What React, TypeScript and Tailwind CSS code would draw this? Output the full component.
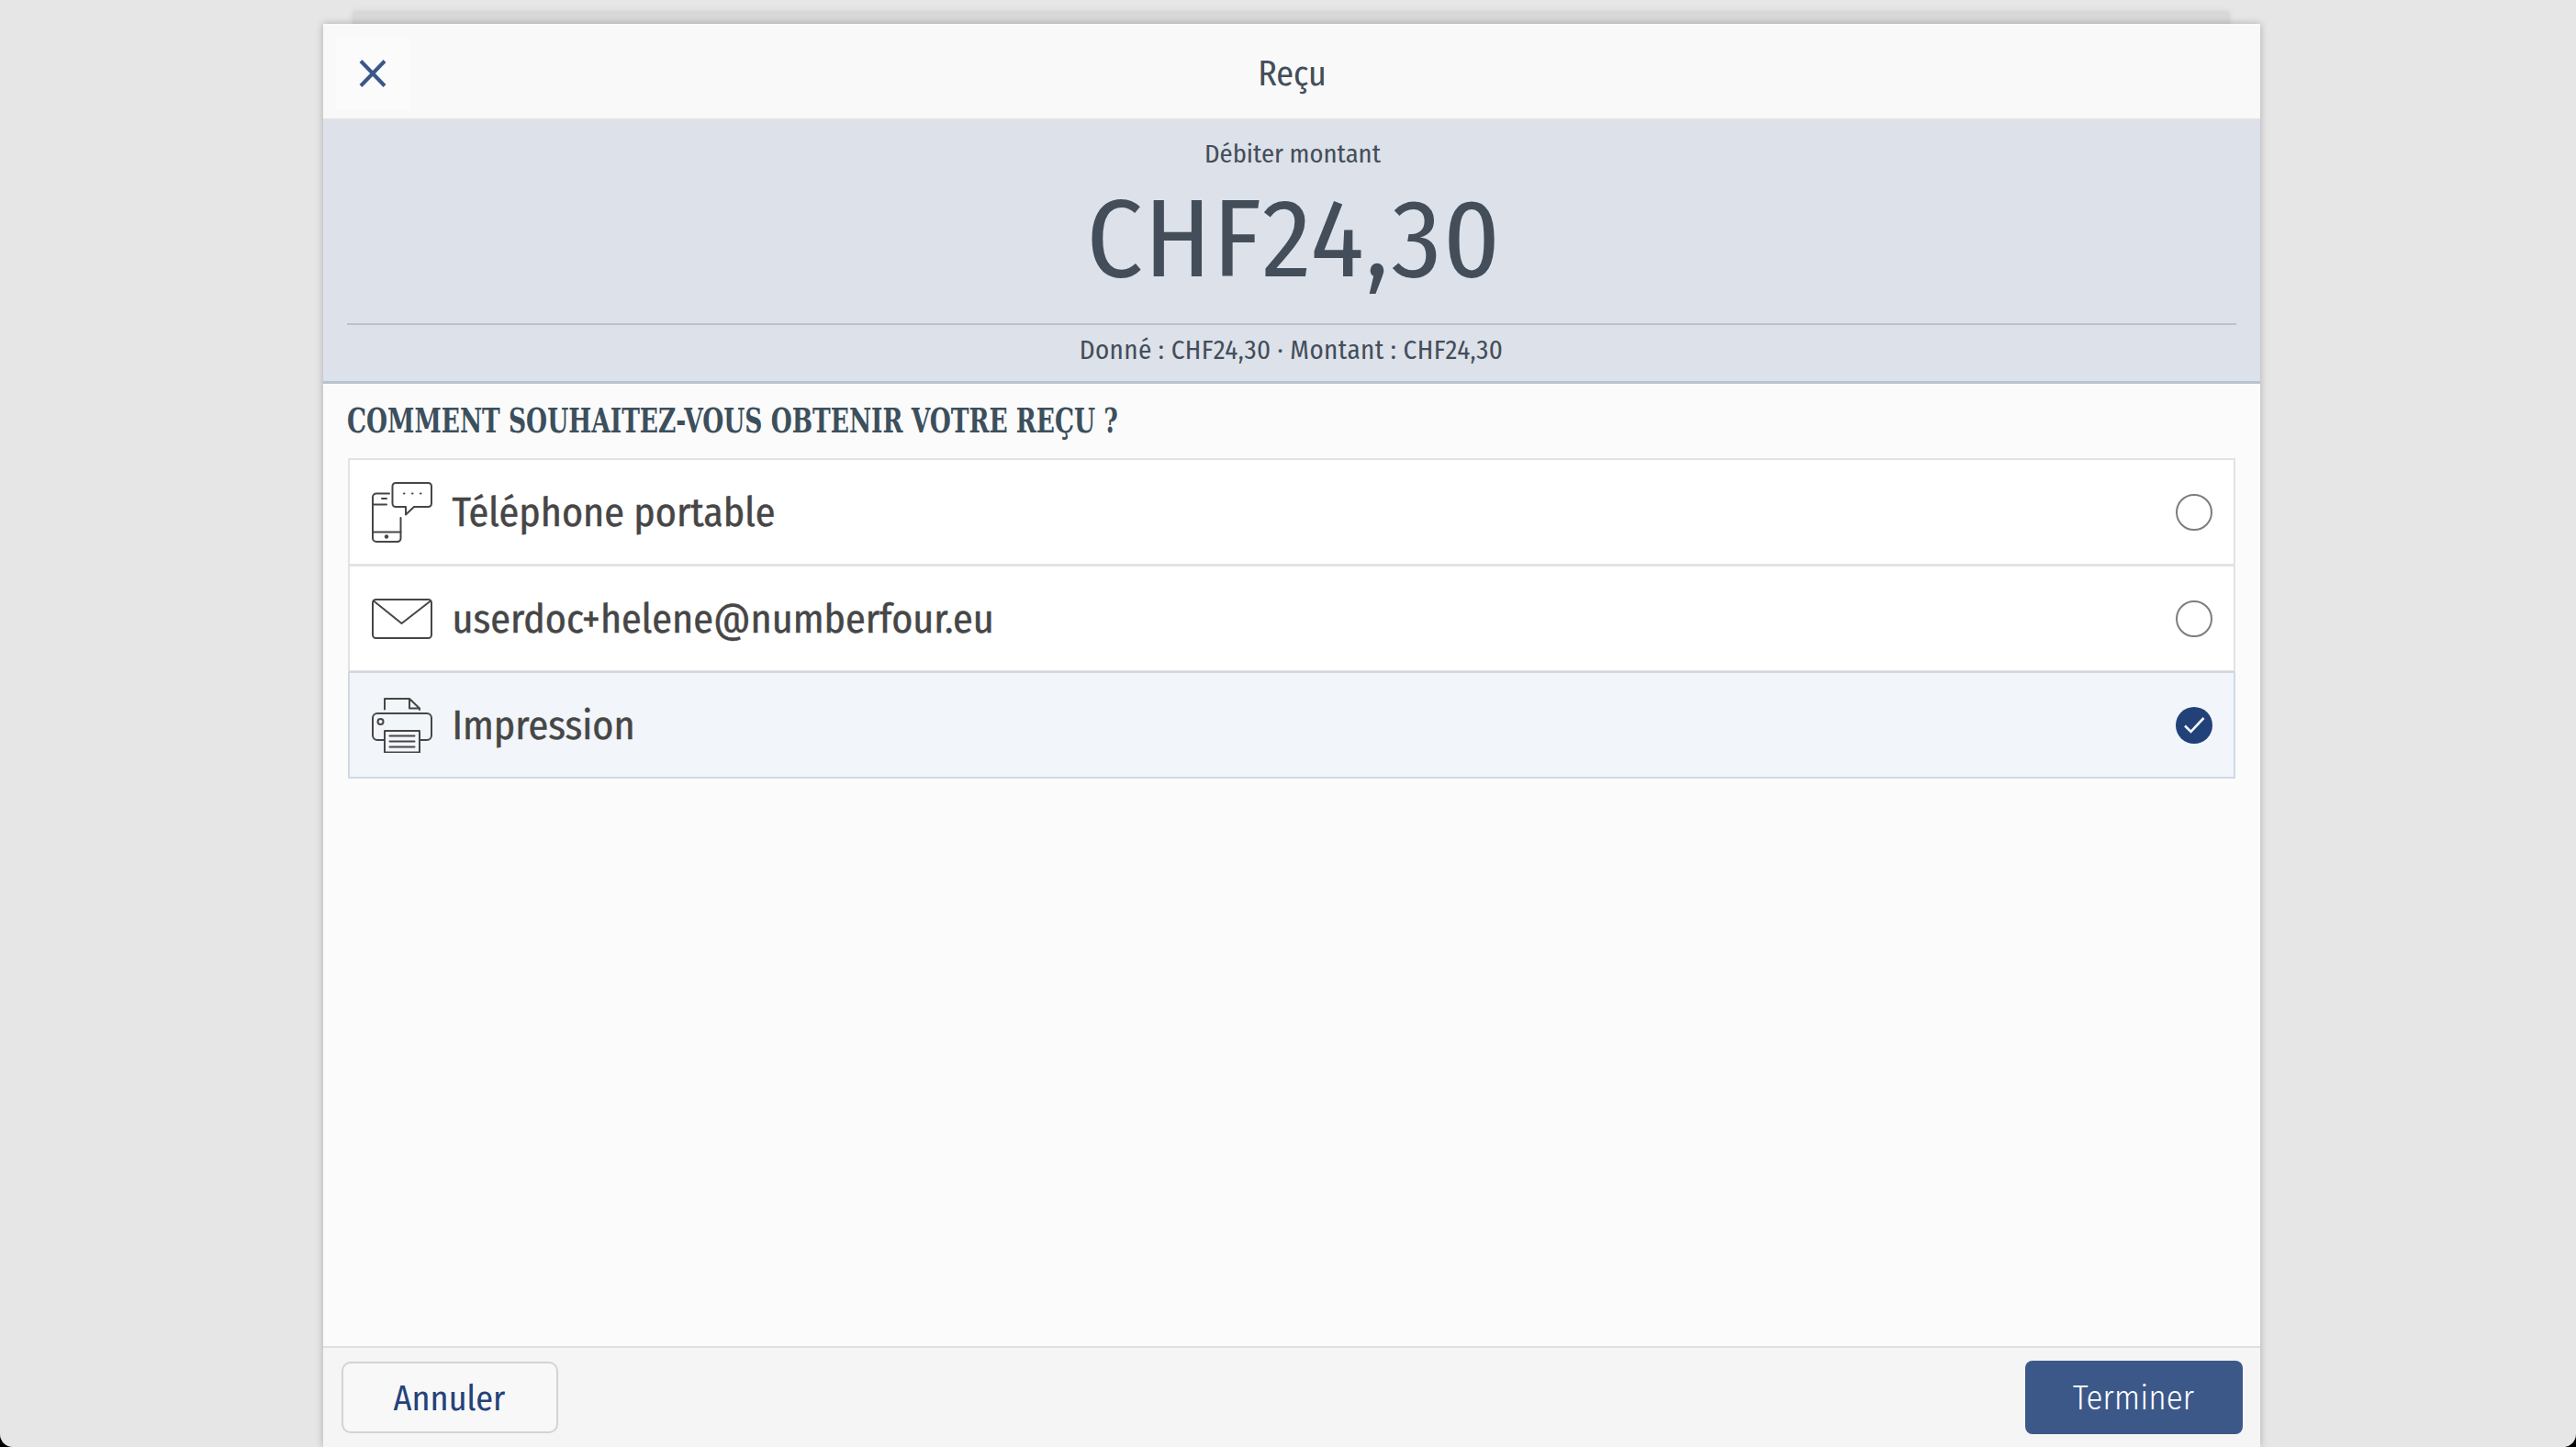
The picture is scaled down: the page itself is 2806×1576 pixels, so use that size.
import React from "react";

const sans = "font-['Fira_Sans_Condensed','Lato','Noto_Sans',sans-serif]";

const PhoneIcon = () => (
    <svg width="66" height="66" viewBox="0 0 66 66" fill="none" stroke="#464646" strokeWidth="2" strokeLinecap="round" strokeLinejoin="round">
        <path d="M37 27H26a3.500 3.500 0 0 1-3.500-3.500V4.500A3.500 3.500 0 0 1 26 1h35.500A3.500 3.500 0 0 1 65 4.500v19a3.500 3.500 0 0 1-3.500 3.500H46l-9 8.500z" />
        <path d="M19 12.500H5A4 4 0 0 0 1 16.500V61a4 4 0 0 0 4 4H28a3.500 3.500 0 0 0 3.500-3.500V39" />
        <path d="M1 24.500H16M11 18H16M1 54.500H31.500M35 12.500h.5M44 12.500h.5M53 12.500h.5" />
        <circle cx="16" cy="59.500" r="2.200" fill="#464646" stroke="none" />
    </svg>
);

const MailIcon = () => (
    <svg width="66" height="44" viewBox="0 0 66 44" fill="none" stroke="#464646" strokeWidth="2" strokeLinecap="round" strokeLinejoin="round">
        <rect x="1" y="1" width="64" height="42" rx="3.500" />
        <path d="M2 2.500L32.500 27L64 2.500" />
    </svg>
);

const PrinterIcon = () => (
    <svg width="66" height="60" viewBox="0 0 66 60" fill="none" stroke="#464646" strokeWidth="2" strokeLinecap="round" strokeLinejoin="round">
        <path d="M14 12.500V1H41L52 11.500V13M41 1V11.500H52" />
        <path d="M14 46H6a5 5 0 0 1-5-5V22a5 5 0 0 1 5-5H60a5 5 0 0 1 5 5V41a5 5 0 0 1-5 5H52" />
        <rect x="14" y="36" width="38" height="23.500" />
        <path d="M19.500 41.500H46.500M19.500 47.500H46.500M19.500 53.500H46.500" />
        <circle cx="9.500" cy="26" r="3" />
    </svg>
);

const Radio = ({ checked }: { checked: boolean }) => {
    if (checked) {
        return (
            <div className="w-10 h-10 rounded-full bg-[#224179] flex items-center justify-center">
                <svg width="24" height="20" viewBox="0 0 24 20" fill="none" stroke="#f2f5f9" strokeWidth="2.600">
                    <path d="M2 10.500L8.500 17L22.500 2" />
                </svg>
            </div>
        );
    }
    return <div className="w-10 h-10 rounded-full border-2 border-[#7d7d7d] bg-white" />;
};

const options = [
    { label: "Téléphone portable", icon: <PhoneIcon />, checked: false },
    { label: "userdoc+helene@numberfour.eu", icon: <MailIcon />, checked: false },
    { label: "Impression", icon: <PrinterIcon />, checked: true },
];

export default function App() {
    return (
        <div className="w-[2806px] h-[1576px] bg-black overflow-hidden">
            <div className={`h-full rounded-b-[14px] bg-[#e6e6e6] flex flex-col items-center pt-3 ${sans}`}>
                {/* sheet peeking out behind the dialog */}
                <div className="w-[2045px] ml-[7px] h-[14px] shrink-0 rounded-t-[4px] bg-[#d8d8d8] shadow-[0_0_6px_rgba(0,0,0,0.08)]" />

                <div className="w-[2110px] ml-[7px] grow flex flex-col bg-[#fbfbfb] shadow-[0_0_8px_rgba(0,0,0,0.25)]">
                    <header className="h-[105px] shrink-0 flex items-center bg-[#f9f9f9] border-b-2 border-[#e3e3e3] pl-[14px] pt-[4px]">
                        <button className="w-[80px] h-[80px] bg-[#fbfbfb] flex items-center justify-center">
                            <svg width="30" height="30" viewBox="0 0 30 30" fill="none" stroke="#3b5789" strokeWidth="4">
                                <path d="M2 1.500L28 28.500M28 1.500L2 28.500" />
                            </svg>
                        </button>
                        <h1 className="flex-1 text-center text-[38px] leading-none text-[#434e5a] pr-[92px]">Reçu</h1>
                    </header>

                    <section className="h-[287px] shrink-0 bg-[#dde1e9] border-b-[3px] border-[#b9c3d0] px-[26px] flex flex-col text-[#434e5a]">
                        <p className="text-center text-[28.5px] leading-none mt-[23px] pl-[3px]">Débiter montant</p>
                        <p className="text-center text-[120px] tracking-[2px] leading-none mt-[18px] h-[151px] pl-[7px]">CHF24,30</p>
                        <div className="border-t-2 border-[#b9c3d0] pt-[13px] text-center text-[29px] tracking-[0.4px] leading-none">
                            Donné : CHF24,30 · Montant : CHF24,30
                        </div>
                    </section>

                    <main className="grow px-[27px]">
                        <h2 className="font-['DejaVu_Serif_Condensed','DejaVu_Serif',serif] font-bold text-[37px] leading-none text-[#3c4f5c] -ml-[1px] mt-[22px] mb-[23px] origin-left scale-x-[0.795] whitespace-nowrap">
                            COMMENT SOUHAITEZ-VOUS OBTENIR VOTRE REÇU ?
                        </h2>
                        <div className="flex flex-col">
                            {options.map((o) => (
                                <div
                                    key={o.label}
                                    className={`h-[117px] flex items-center pl-[24px] pr-[23px] border-2 -mt-[1px] ${
                                        o.checked ? "bg-[#f2f5f9] border-[#cfdae4]" : "bg-white border-[#e2e2e2]"
                                    }`}
                                >
                                    <div className="w-[66px] flex justify-center">{o.icon}</div>
                                    <span className="ml-[22px] pt-[2px] grow text-[44px] leading-none text-[#464646] [-webkit-text-stroke:0.4px_#464646]">{o.label}</span>
                                    <Radio checked={o.checked} />
                                </div>
                            ))}
                        </div>
                    </main>

                    <footer className="h-[110px] shrink-0 bg-[#f5f5f5] border-t-2 border-[#e0e0e0] flex items-center justify-between pl-[20px] pr-[19px]">
                        <button className="w-[236px] h-[78px] rounded-[10px] border-2 border-[#d3d3d3] bg-[#f8f8f8] text-[38px] text-[#24427a] pt-[2px]">Annuler</button>
                        <button className="w-[237px] h-[80px] rounded-[8px] bg-[#3c5889] text-[37px] font-light text-white pt-[2px]">Terminer</button>
                    </footer>
                </div>
            </div>
        </div>
    );
}
